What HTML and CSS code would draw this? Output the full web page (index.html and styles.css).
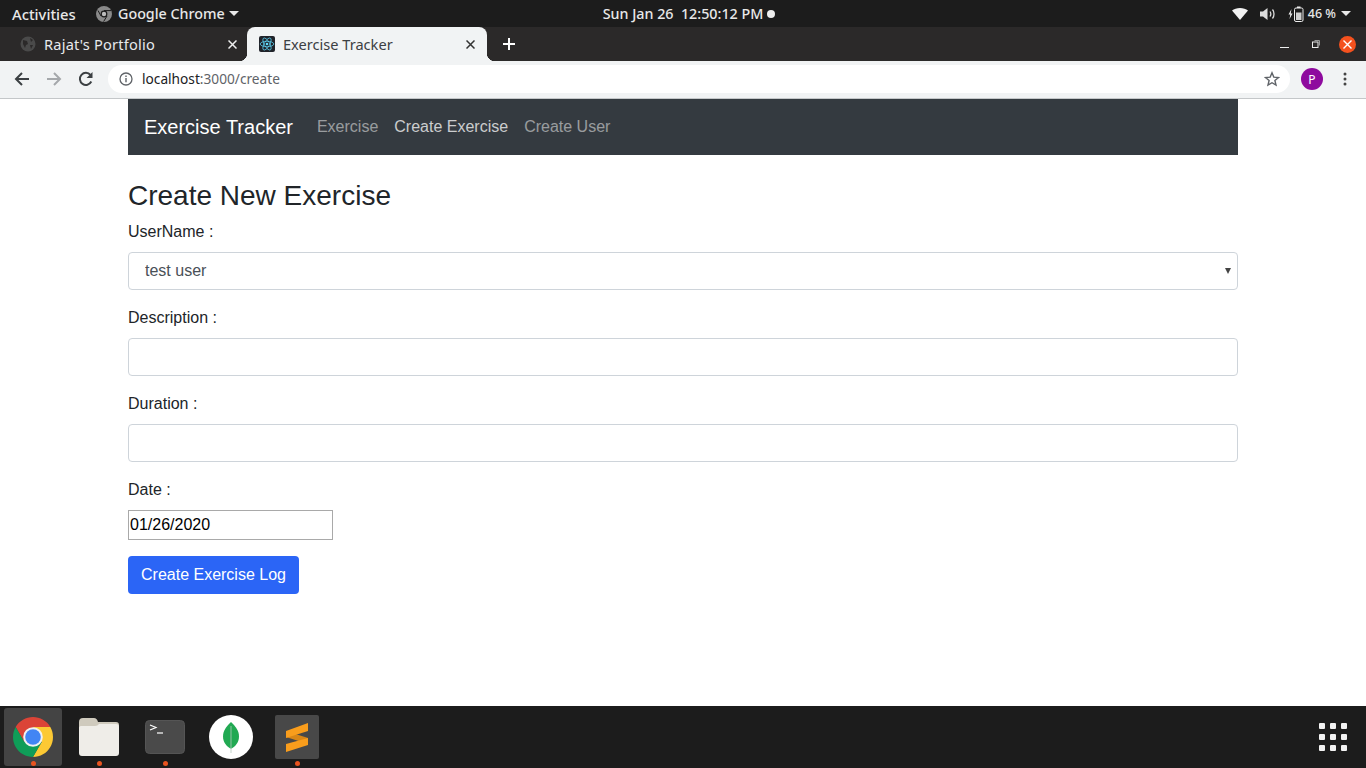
FILE: index.html
```html
<!DOCTYPE html>
<html lang="en">
<head>
  <meta charset="UTF-8" />
  <meta name="viewport" content="width=device-width, initial-scale=1.0"/>
  <title>Exercise Tracker</title>
  <link rel="stylesheet" href="styles.css">
</head>
<body>
  <!-- Desktop top bar -->
  <div class="topbar">
    <div class="topbar-left">
      <span class="activities">Activities</span>
      <span class="app-menu">
        <svg class="app-icon" width="16" height="16" viewBox="0 0 16 16"><circle cx="8" cy="8" r="8" fill="#8a8a8a"/><circle cx="8" cy="8" r="3.4" fill="#1c1c1c"/><circle cx="8" cy="8" r="2.2" fill="#bdbdbd"/><path d="M8 4.6h7M5 10l-3-5.5M11 10l-3.4 5.6" stroke="#1c1c1c" stroke-width="1"/></svg>
        <span>Google Chrome</span>
        <i class="caret"></i>
      </span>
    </div>
    <div class="clock">Sun Jan 26&nbsp; 12:50:12 PM<i class="clock-dot"></i></div>
    <div class="tray">
      <svg width="16" height="12" viewBox="0 0 16 12"><path d="M0 2.6C2 1 4.8 0 8 0s6 1 8 2.6L8 12z" fill="#f2f2f2"/></svg>
      <svg width="16" height="14" viewBox="0 0 16 14"><path d="M0 4.5h3L7.5 1v12L3 9.500H0z" fill="#dcdcdc"/><path d="M10 4.500c1 1.500 1 3.500 0 5M12.500 2.500c2 2.500 2 6.500 0 9" fill="none" stroke="#dcdcdc" stroke-width="1.300"/></svg>
      <svg width="16" height="16" viewBox="0 0 16 16"><path d="M3.500 3 0.500 8.500h1.800L1.500 13l3-5.500H2.700z" fill="#eee"/><rect x="6.500" y="2" width="8.500" height="13.500" rx="1.500" fill="none" stroke="#eee"/><rect x="9" y="0.500" width="3.500" height="1.500" fill="#eee"/><rect x="8" y="6.500" width="5.500" height="7.500" fill="#cfcfcf"/></svg>
      <span class="battery">46 %</span>
      <i class="caret"></i>
    </div>
  </div>

  <!-- Browser tab strip -->
  <div class="tabstrip">
    <div class="tab">
      <svg class="favicon" width="16" height="16" viewBox="0 0 16 16"><circle cx="8" cy="8" r="7.500" fill="#4a4a4a"/><path d="M3 4l4 1 1 3-2 1-1 3-2-4zM10 2l3 2-2 2zM10 9l3 0-2 4z" fill="#2b2929"/></svg>
      <span class="tab-title tab-title-wide">Rajat's Portfolio</span>
      <svg class="tab-close" width="9" height="9" viewBox="0 0 9 9"><path d="M.5.500l8 8M8.500.5l-8 8" stroke="#eee" stroke-width="1.500"/></svg>
    </div>
    <div class="tab tab-active">
      <svg class="favicon" width="16" height="16" viewBox="0 0 16 16"><rect width="16" height="16" rx="2" fill="#20232a"/><g fill="none" stroke="#61dafb" stroke-width="0.700"><ellipse cx="8" cy="8" rx="6.800" ry="2.700"/><ellipse cx="8" cy="8" rx="6.800" ry="2.700" transform="rotate(60 8 8)"/><ellipse cx="8" cy="8" rx="6.800" ry="2.700" transform="rotate(120 8 8)"/></g><circle cx="8" cy="8" r="1.300" fill="#61dafb"/></svg>
      <span class="tab-title">Exercise Tracker</span>
      <svg class="tab-close" width="9" height="9" viewBox="0 0 9 9"><path d="M.5.500l8 8M8.500.5l-8 8" stroke="#333" stroke-width="1.500"/></svg>
    </div>
    <svg class="new-tab" width="12" height="12" viewBox="0 0 12 12"><path d="M6 0v12M0 6h12" stroke="#fff" stroke-width="2"/></svg>
    <div class="window-btns">
      <svg width="9" height="8" viewBox="0 0 9 8"><path d="M0 7.500h9" stroke="#eee"/></svg>
      <svg width="8" height="8" viewBox="0 0 8 8"><rect x="0.500" y="2" width="5.500" height="5.500" fill="none" stroke="#eee"/><path d="M2.500 .5h5v5" fill="none" stroke="#999"/></svg>
      <span class="win-close"><svg width="9" height="9" viewBox="0 0 9 9"><path d="M.5.500l8 8M8.500.5l-8 8" stroke="#fff" stroke-width="1.400"/></svg></span>
    </div>
  </div>

  <!-- Browser toolbar -->
  <div class="toolbar">
    <svg class="tool" width="16" height="16" viewBox="0 0 16 16"><path d="M15 8H2M8 2 2 8l6 6" fill="none" stroke="#3c4043" stroke-width="2"/></svg>
    <svg class="tool" width="16" height="16" viewBox="0 0 16 16"><path d="M1 8h13M8 2l6 6-6 6" fill="none" stroke="#a5a8ab" stroke-width="2"/></svg>
    <svg class="tool" width="16" height="16" viewBox="0 0 16 16"><path d="M13.300 10.500A6 6 0 1 1 12.500 4" fill="none" stroke="#3c4043" stroke-width="2"/><path d="M14.500 1v6h-6z" fill="#3c4043"/></svg>
    <div class="omnibox">
      <svg width="14" height="14" viewBox="0 0 14 14"><circle cx="7" cy="7" r="6" fill="none" stroke="#5f6368" stroke-width="1.300"/><path d="M7 6v4.200M7 3.500v1.400" stroke="#5f6368" stroke-width="1.400"/></svg>
      <span class="url">localhost<span class="url-dim">:3000/create</span></span>
      <svg class="star" width="16" height="16" viewBox="0 0 16 16"><path d="M8 1.800l1.800 4.300 4.700.4-3.600 3 1.100 4.600L8 11.700l-4 2.400 1.100-4.600-3.600-3 4.700-.4z" fill="none" stroke="#5f6368" stroke-width="1.400"/></svg>
    </div>
    <span class="avatar">P</span>
    <svg class="menu-dots" width="4" height="14" viewBox="0 0 4 14"><circle cx="2" cy="2" r="1.500" fill="#444"/><circle cx="2" cy="7" r="1.500" fill="#444"/><circle cx="2" cy="12" r="1.500" fill="#444"/></svg>
  </div>

  <!-- Page -->
  <main class="page">
    <nav class="navbar">
      <a class="brand" href="#">Exercise Tracker</a>
      <a class="nav-link" href="#">Exercise</a>
      <a class="nav-link nav-current" href="#">Create Exercise</a>
      <a class="nav-link" href="#">Create User</a>
    </nav>

    <h3 class="page-title">Create New Exercise</h3>
    <form>
      <div class="form-group">
        <label>UserName :</label>
        <div class="select-wrap">
          <select class="form-control"><option>test user</option></select>
        </div>
      </div>
      <div class="form-group">
        <label>Description :</label>
        <input class="form-control" type="text" />
      </div>
      <div class="form-group">
        <label>Duration :</label>
        <input class="form-control" type="text" />
      </div>
      <div class="form-group">
        <label>Date :</label>
        <input class="date-input" type="text" value="01/26/2020" />
      </div>
      <button class="btn-primary" type="button">Create Exercise Log</button>
    </form>
  </main>

  <!-- Dock -->
  <div class="dock">
    <div class="dock-item dock-active">
      <svg width="40" height="40" viewBox="-20 -20 40 40">
        <path d="M-17.320-10A20 20 0 0 1 17.320-10L0-10-8.660 5z" fill="#db4437"/>
        <path d="M-17.320-10A20 20 0 0 1 17.320-10L0-10-8.660 5z" fill="#fcc934" transform="rotate(120)"/>
        <path d="M-17.320-10A20 20 0 0 1 17.320-10L0-10-8.660 5z" fill="#0f9d58" transform="rotate(240)"/>
        <circle r="9.800" fill="#f1f1f1"/>
        <circle r="7.800" fill="#4285f4"/>
      </svg>
      <i class="dock-dot"></i>
    </div>
    <div class="dock-item">
      <svg width="40" height="38" viewBox="0 0 40 38">
        <path d="M0 4a4 4 0 0 1 4-4h11c2 0 3 1 4 4h18a3 3 0 0 1 3 3v6H0z" fill="#cfcabd"/>
        <path d="M0 10c0-1 .5-2 2-2h14c2 0 3-1 4-2h17a3 3 0 0 1 3 3v26a3 3 0 0 1-3 3H3a3 3 0 0 1-3-3z" fill="#efede8"/>
      </svg>
      <i class="dock-dot"></i>
    </div>
    <div class="dock-item">
      <svg width="40" height="34" viewBox="0 0 40 34">
        <rect x="0.500" y="0.500" width="39" height="33" rx="4" fill="#4a4a4a" stroke="#555"/>
        <path d="M5 5l6 2.500L5 10" fill="none" stroke="#fff" stroke-width="1.200"/>
        <path d="M12 13h6" stroke="#fff" stroke-width="1.200"/>
      </svg>
      <i class="dock-dot"></i>
    </div>
    <div class="dock-item">
      <span class="mongo">
        <svg width="16" height="31" viewBox="0 0 16 31"><path d="M8 0c5 5 8 9 8 14.500 0 6-3.500 9.500-7.300 12H7.300C3.500 24 0 20.500 0 14.500 0 9 3 5 8 0z" fill="#21a952"/><path d="M8 4v27" stroke="#b5c9bd" stroke-width="0.800"/></svg>
      </span>
    </div>
    <div class="dock-item">
      <span class="sublime">
        <svg width="22" height="29" viewBox="0 0 22 29"><path d="M0 14 22 21v-6L0 8z" fill="#d98616"/><path d="M22 0v8L0 15V8z" fill="#f99d1c"/><path d="M22 15v7L0 29v-8z" fill="#f99d1c"/></svg>
      </span>
      <i class="dock-dot"></i>
    </div>
    <div class="apps-grid">
      <i></i><i></i><i></i><i></i><i></i><i></i><i></i><i></i><i></i>
    </div>
  </div>
</body>
</html>
```

FILE: styles.css
```css
html, body {
  margin: 0;
  height: 100%;
  overflow: hidden;
}
body {
  width: 1366px;
  height: 768px;
  display: flex;
  flex-direction: column;
  background: #fff;
  font-family: "Liberation Sans", Arial, sans-serif;
  color: #212529;
}

/* top bar */
.topbar {
  height: 27px;
  flex: none;
  background: #1c1c1c;
  color: #e8e8e8;
  font-family: "Noto Sans", sans-serif;
  font-size: 14.300px;
  font-weight: 500;
  display: grid;
  grid-template-columns: 1fr auto 1fr;
  align-items: center;
}
.topbar-left {
  display: flex;
  align-items: center;
  padding-left: 12px;
}
.activities {
  width: 84px;
  font-size: 14.800px;
}
.app-menu {
  display: flex;
  align-items: center;
  gap: 5px;
}
.app-menu .caret {
  margin-left: -1px;
}
.caret {
  display: inline-block;
  width: 0;
  height: 0;
  border-left: 5px solid transparent;
  border-right: 5px solid transparent;
  border-top: 5px solid #e8e8e8;
}
.app-icon {
  margin-right: 1px;
}
.clock {
  display: flex;
  align-items: center;
  font-size: 14.300px;
  padding-left: 12px;
}
.clock-dot {
  width: 8px;
  height: 8px;
  border-radius: 50%;
  background: #eee;
  margin-left: 4px;
}
.tray {
  display: flex;
  align-items: center;
  justify-content: flex-end;
  padding-right: 15px;
}
.tray svg {
  margin-right: 12px;
}
.tray svg:nth-child(3) {
  margin-right: 4px;
}
.battery {
  font-size: 12.500px;
  margin-right: 5px;
}

/* tabs */
.tabstrip {
  height: 34px;
  flex: none;
  background: #2b2929;
  display: flex;
  align-items: center;
  color: #e8eaed;
  font-family: "Noto Sans", sans-serif;
  font-size: 14.600px;
}
.tab {
  width: 240px;
  height: 34px;
  display: flex;
  align-items: center;
  padding: 0 12px;
  box-sizing: border-box;
  flex: none;
}
.tab:first-child {
  width: 247px;
  padding-left: 20px;
  padding-right: 10px;
}
.tab-title {
  flex: 1;
  margin-left: 8px;
}
.tab-title-wide {
  letter-spacing: 0.200px;
}
.tab-active {
  position: relative;
  background: #f1f3f4;
  color: #3c4043;
  border-radius: 8px 8px 0 0;
}
.tab-active::before,
.tab-active::after {
  content: "";
  position: absolute;
  bottom: 0;
  width: 8px;
  height: 8px;
}
.tab-active::before {
  left: -8px;
  background: radial-gradient(circle at 0 0, transparent 8px, #f1f3f4 8.500px);
}
.tab-active::after {
  right: -8px;
  background: radial-gradient(circle at 100% 0, transparent 8px, #f1f3f4 8.500px);
}
.new-tab {
  margin-left: 16px;
}
.window-btns {
  margin-left: auto;
  display: flex;
  align-items: center;
  gap: 23px;
  padding-right: 10px;
}
.win-close {
  width: 17px;
  height: 17px;
  margin-left: -4px;
  border-radius: 50%;
  background: #f4511e;
  display: flex;
  align-items: center;
  justify-content: center;
}

/* toolbar */
.toolbar {
  height: 38px;
  flex: none;
  background: #f1f3f4;
  border-bottom: 1px solid #c4c7c9;
  box-sizing: border-box;
  display: flex;
  align-items: center;
  padding: 0 0 1px 14px;
}
.tool {
  margin-right: 16px;
}
.omnibox {
  width: 1182px;
  height: 28px;
  margin-left: -2px;
  background: #fff;
  border-radius: 14px;
  display: flex;
  align-items: center;
  padding: 0 10px 0 11px;
  box-sizing: border-box;
  font-family: "Noto Sans", sans-serif;
  font-size: 13.700px;
  color: #202124;
}
.url {
  margin-left: 9px;
  padding-bottom: 2px;
  flex: 1;
}
.url-dim {
  color: #5f6368;
}
.avatar {
  width: 22px;
  height: 22px;
  margin-left: 11px;
  border-radius: 50%;
  background: #8e0a9e;
  color: #fff;
  font-family: "Noto Sans", sans-serif;
  font-size: 12px;
  display: flex;
  align-items: center;
  justify-content: center;
}
.menu-dots {
  margin-left: 20px;
}

/* page */
.page {
  flex: 1;
  width: 1110px;
  margin: 0 auto;
}
.navbar {
  height: 56px;
  background: #343a40;
  display: flex;
  align-items: center;
  padding: 0 16px;
  box-sizing: border-box;
}
.brand {
  color: #fff;
  font-size: 20px;
  margin-right: 16px;
  text-decoration: none;
}
.nav-link {
  color: rgba(255,255,255,0.5);
  font-size: 16px;
  padding: 0 8px;
  text-decoration: none;
}
.nav-current {
  color: rgba(255,255,255,0.75);
}
.page-title {
  font-size: 28px;
  font-weight: 500;
  line-height: 1.2;
  margin: 24px 0 7.400px;
}
.form-group {
  margin-bottom: 16px;
}
label {
  display: block;
  font-size: 16px;
  line-height: 24px;
  margin-bottom: 8px;
}
.form-control {
  display: block;
  width: 100%;
  height: 38px;
  padding: 6px 12px;
  box-sizing: border-box;
  font-family: inherit;
  font-size: 16px;
  color: #495057;
  background: #fff;
  border: 1px solid #ced4da;
  border-radius: 4px;
}
select.form-control {
  appearance: none;
  padding-left: 16px;
}
.select-wrap {
  position: relative;
}
.select-wrap::after {
  content: "";
  position: absolute;
  right: 7px;
  top: 16px;
  border-left: 3.500px solid transparent;
  border-right: 3.500px solid transparent;
  border-top: 6px solid #444;
}
.date-input {
  display: block;
  width: 205px;
  height: 30px;
  padding: 1px;
  box-sizing: border-box;
  font-family: inherit;
  font-size: 16px;
  color: #000;
  border: 1px solid #a9a9a9;
}
.btn-primary {
  display: block;
  height: 38px;
  padding: 6px 13px;
  font-family: inherit;
  font-size: 16px;
  color: #fff;
  background: #2b65f6;
  border: none;
  border-radius: 4px;
}

/* dock */
.dock {
  height: 62px;
  flex: none;
  background: #1c1c1c;
  display: flex;
  align-items: center;
}
.dock-item {
  position: relative;
  width: 66px;
  height: 62px;
  flex: none;
  display: flex;
  align-items: center;
  justify-content: center;
}
.dock-active::before {
  content: "";
  position: absolute;
  left: 4px;
  right: 4px;
  top: 2px;
  bottom: 2px;
  background: #444;
  border-radius: 3px;
}
.dock-item svg {
  position: relative;
}
.dock-dot {
  position: absolute;
  left: 31px;
  bottom: 2px;
  width: 5px;
  height: 5px;
  border-radius: 50%;
  background: #e95420;
}
.mongo {
  width: 44px;
  height: 44px;
  border-radius: 50%;
  background: #fff;
  display: flex;
  align-items: center;
  justify-content: center;
}
.sublime {
  width: 44px;
  height: 44px;
  background: #484848;
  border-radius: 2px;
  display: flex;
  align-items: center;
  justify-content: center;
}
.apps-grid {
  margin-left: auto;
  margin-right: 19px;
  display: grid;
  grid-template-columns: repeat(3, 6px);
  gap: 5px;
}
.apps-grid i {
  width: 6px;
  height: 6px;
  background: #f2f2f2;
  border-radius: 1px;
}
```
